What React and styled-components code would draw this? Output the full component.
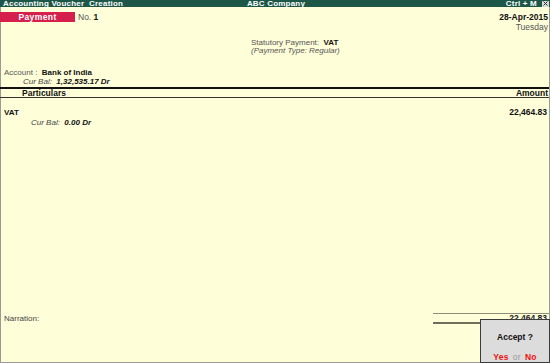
import styled, { createGlobalStyle } from 'styled-components'

const Global = createGlobalStyle`
	html, body {
		margin: 0;
		padding: 0;
		background: #fefed9;
	}
	body {
		font-family: "Liberation Sans", Arial, sans-serif;
		font-size: 8px;
		color: #222;
	}
`

const TitleBar = styled.div`
	height: 7px;
	background: #1d5747;
	color: #fff;
	font-weight: bold;
	font-size: 8px;
	line-height: 7px;
	display: grid;
	grid-template-columns: 1fr auto 1fr;
	padding: 0 1px 0 3px;
	letter-spacing: 0.2px;
`

const TitleRight = styled.div`
	display: flex;
	justify-content: flex-end;
	align-items: center;
	gap: 5px;
`

const CloseBox = styled.span`
	width: 7px;
	height: 6px;
	background: #d9d9d9;
	display: flex;
	align-items: center;
	justify-content: center;
`

const Frame = styled.div`
	position: relative;
	height: 355px;
	border: 1px solid #9a9a96;
	border-top: none;
	display: flex;
	flex-direction: column;
`

const TopRow = styled.div`
	display: flex;
	justify-content: space-between;
	margin-top: 5px;
	margin-left: -1px;
	padding-right: 1px;
`

const VoucherType = styled.div`
	display: flex;
	align-items: center;
	gap: 3px;
	height: 10px;
	font-size: 8.5px;
`

const TypeLabel = styled.div`
	width: 75px;
	height: 10px;
	line-height: 10px;
	background: #d51f4c;
	color: #fff;
	font-weight: bold;
	text-align: center;
	letter-spacing: 0.4px;
`

const DateBlock = styled.div`
	text-align: right;
	line-height: 10px;
	font-size: 8.5px;
`

const Bold = styled.b`
	color: #111;
	font-style: ${({ $italic }) => ($italic ? 'italic' : 'normal')};
`

const Muted = styled.span`
	color: #555;
`

const Centered = styled.div`
	padding-left: 250px;
	line-height: ${({ $lh }) => $lh || 9}px;
	font-style: ${({ $italic }) => ($italic ? 'italic' : 'normal')};
	margin-top: ${({ $mt }) => $mt || 0}px;
`

const Line = styled.div`
	line-height: 9px;
	padding-left: ${({ $indent }) => $indent || 3}px;
	margin-top: ${({ $mt }) => $mt || 0}px;
	display: flex;
	justify-content: space-between;
	padding-right: 2px;
`

const Amount = styled.b`
	color: #111;
	font-size: 8.5px;
`

const Italic = styled.span`
	font-style: italic;
	color: #444;
`

const Header = styled.div`
	margin-top: 1px;
	margin-left: -1px;
	border-top: 2px solid #111;
	border-bottom: 1px solid #333;
	height: 8px;
	line-height: 8px;
	display: flex;
	justify-content: space-between;
	padding: 0 1px 0 22px;
	font-weight: bold;
	font-size: 8.5px;
	color: #111;
`

const Spacer = styled.div`
	flex: 1;
`

const Footer = styled.div`
	display: flex;
	justify-content: space-between;
	align-items: center;
	margin-bottom: 38px;
`

const Narration = styled.div`
	padding-left: 3px;
	color: #444;
`

const Totals = styled.div`
	width: 114px;
	height: 8px;
	border-top: 1px solid #8e8e78;
	border-bottom: 2px solid #6e6e5a;
	text-align: right;
	line-height: 8px;
	font-weight: bold;
	font-size: 8.5px;
	padding-right: 2px;
	box-sizing: content-box;
`

const Dialog = styled.div`
	position: absolute;
	right: -1px;
	bottom: -1px;
	width: 68px;
	height: 42px;
	background: #dcdcdc;
	border: 1px solid #3c3c3c;
	display: flex;
	flex-direction: column;
	align-items: center;
	font-weight: bold;
	color: #111;
`

const Question = styled.div`
	margin-top: 12px;
	font-size: 8.5px;
`

const Choices = styled.div`
	margin-top: auto;
	line-height: 9px;
	letter-spacing: 0.3px;
	font-size: 8.5px;
`

const Choice = styled.span`
	color: #f01010;
`

const Or = styled.span`
	color: #999;
	font-weight: normal;
	margin: 0 4px;
`

const App = () => (
	<>
		<Global />
		<TitleBar>
			<span>Accounting Voucher&nbsp; Creation</span>
			<span>ABC Company</span>
			<TitleRight>
				<span>Ctrl + M</span>
				<CloseBox>
					<svg width="5" height="5" viewBox="0 0 5 5">
						<path d="M0.5 0.5 L4.5 4.5 M4.5 0.5 L0.5 4.5" stroke="#333" strokeWidth="1" />
					</svg>
				</CloseBox>
			</TitleRight>
		</TitleBar>
		<Frame>
			<TopRow>
				<VoucherType>
					<TypeLabel>Payment</TypeLabel>
					<Muted>No. <Bold>1</Bold></Muted>
				</VoucherType>
				<DateBlock>
					<Bold>28-Apr-2015</Bold>
					<br />
					<Muted>Tuesday</Muted>
				</DateBlock>
			</TopRow>
			<Centered $mt={6}>
				<Muted>Statutory Payment:&nbsp; </Muted>
				<Bold>VAT</Bold>
			</Centered>
			<Centered $lh={8} $italic>
				<Muted>(Payment Type: Regular)</Muted>
			</Centered>
			<Line $mt={13}>
				<span>
					<Muted>Account :&nbsp; </Muted>
					<Bold>Bank of India</Bold>
				</span>
			</Line>
			<Line $indent={22}>
				<span>
					<Italic>Cur Bal:&nbsp; </Italic>
					<Bold $italic>1,32,535.17 Dr</Bold>
				</span>
			</Line>
			<Header>
				<span>Particulars</span>
				<span>Amount</span>
			</Header>
			<Line $mt={10}>
				<Bold>VAT</Bold>
				<Amount>22,464.83</Amount>
			</Line>
			<Line $indent={30} $mt={1}>
				<span>
					<Italic>Cur Bal:&nbsp; </Italic>
					<Bold $italic>0.00 Dr</Bold>
				</span>
			</Line>
			<Spacer />
			<Footer>
				<Narration>Narration:</Narration>
				<Totals>22,464.83</Totals>
			</Footer>
			<Dialog>
				<Question>Accept ?</Question>
				<Choices>
					<Choice>Yes</Choice>
					<Or>or</Or>
					<Choice>No</Choice>
				</Choices>
			</Dialog>
		</Frame>
	</>
)

export default App
